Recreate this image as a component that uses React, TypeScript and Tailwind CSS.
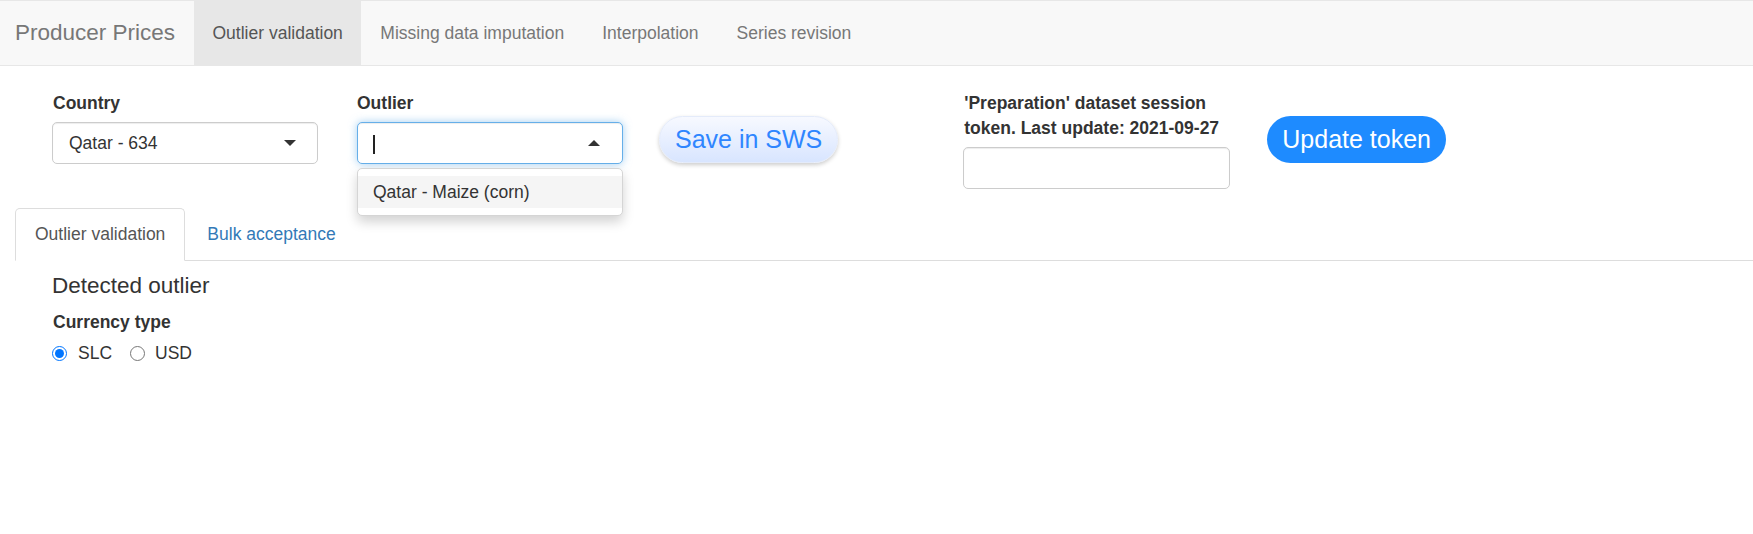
const navLinks = ["Outlier validation", "Missing data imputation", "Interpolation", "Series revision"];

const App = () => {
  return (
    <div className="min-h-[534px] bg-white text-[#333] font-['Liberation_Sans',Arial,sans-serif] text-[17.5px]">
      {/* navbar */}
      <div className="flex h-[66px] border-y border-[#e7e7e7] bg-[#f8f8f8]">
        <div className="w-[194px] pl-[15px] leading-[64px] text-[22.5px] text-[#777]">Producer Prices</div>
        {navLinks.map((link, i) => (
          <div
            key={link}
            className={
              i == 0
                ? "px-[18.5px] leading-[64px] bg-[#e7e7e7] text-[#555]"
                : "px-[19px] leading-[64px] text-[#777]"
            }
          >
            {link}
          </div>
        ))}
      </div>

      {/* inputs row */}
      <div className="flex items-start mt-[25px] pl-[52px]">
        <div className="w-[266px]">
          <div className="font-bold leading-[25px] mb-[6px] pl-px">Country</div>
          <div className="flex items-center justify-between h-[42px] border border-[#ccc] rounded-[5px] pl-[16px] pr-[21px] bg-white shadow-[inset_0_1px_1px_rgba(0,0,0,0.075)]">
            <span>Qatar - 634</span>
            <span className="w-0 h-0 border-x-[6.5px] border-x-transparent border-t-[6.5px] border-t-[#333]"></span>
          </div>
        </div>

        <div className="relative w-[266px] ml-[39px]">
          <div className="font-bold leading-[25px] mb-[6px]">Outlier</div>
          <div className="flex items-center justify-between h-[42px] border border-[#66afe9] rounded-[5px] pl-[15px] pr-[22px] bg-white shadow-[inset_0_1px_1px_rgba(0,0,0,0.075),0_0_8px_rgba(102,175,233,0.6)]">
            <span className="w-[2px] h-[19px] bg-[#222] mt-[2px]"></span>
            <span className="w-0 h-0 border-x-[6.5px] border-x-transparent border-b-[6.5px] border-b-[#333]"></span>
          </div>
          <div className="absolute left-0 top-[77px] w-[266px] py-[7px] bg-white border border-[#d5d5d5] rounded-[5px] shadow-[0_6px_12px_rgba(0,0,0,0.175)]">
            <div className="h-[32px] leading-[32px] pl-[15px] bg-[#f5f5f5]">Qatar - Maize (corn)</div>
          </div>
        </div>

        <button className="ml-[36px] mt-[25px] h-[47px] px-[15px] rounded-full border border-[#e4ebfa] bg-gradient-to-b from-[#f7f9ff] to-[#d8e5ff] text-[25px] text-[#2f86ff] shadow-[0_2px_4px_rgba(0,0,0,0.2)]">
          Save in SWS
        </button>

        <div className="w-[267px] ml-[125px]">
          <div className="font-bold leading-[25px] mb-[6px] pl-px">
            'Preparation' dataset session token. Last update: 2021-09-27
          </div>
          <div className="h-[42px] border border-[#ccc] rounded-[5px] bg-white shadow-[inset_0_1px_1px_rgba(0,0,0,0.075)]"></div>
        </div>

        <button className="ml-[37px] mt-[25px] h-[47px] px-[15px] rounded-full bg-[#1e8bff] text-[25px] text-white">
          Update token
        </button>
      </div>

      {/* tabs */}
      <div className="flex ml-[15px] mt-[19px] border-b border-[#ddd]">
        <div className="-mb-px px-[19px] pt-[13px] pb-[13px] leading-[25px] border border-[#ddd] border-b-white rounded-t-[5px] bg-white text-[#555]">
          Outlier validation
        </div>
        <div className="ml-[2px] px-[20px] pt-[14px] pb-[12px] leading-[25px] text-[#337ab7]">Bulk acceptance</div>
      </div>

      <div className="pl-[52px]">
        <h4 className="mt-[12px] mb-[12px] text-[22.5px] leading-[25px]">Detected outlier</h4>
        <div className="font-bold leading-[25px] mb-[6px] pl-px">Currency type</div>
        <div className="flex items-center h-[25px]">
          <input type="radio" name="cur" defaultChecked className="w-[15px] h-[15px] m-0 accent-[#0075ff]" />
          <span className="ml-[11px]">SLC</span>
          <input type="radio" name="cur" className="w-[15px] h-[15px] m-0 ml-[18px]" />
          <span className="ml-[10px]">USD</span>
        </div>
      </div>
    </div>
  );
};

export default App;
